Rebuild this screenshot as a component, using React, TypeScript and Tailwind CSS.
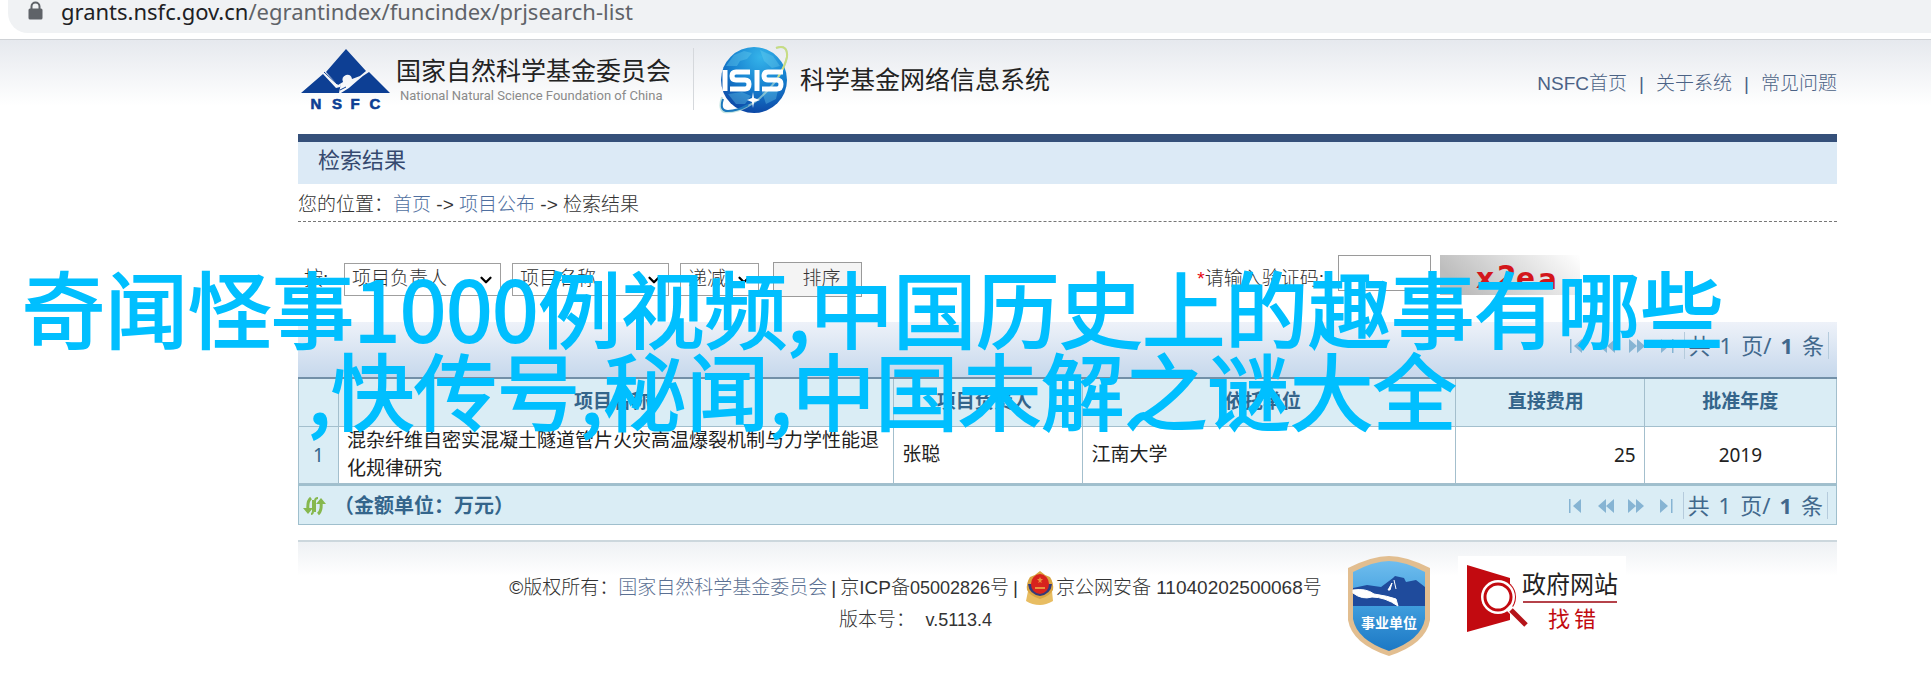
import type { ReactNode } from "react";
import { ChevronDown } from "lucide-react";

const project = {
  index: 1,
  name: "混杂纤维自密实混凝土隧道管片火灾高温爆裂机制与力学性能退化规律研究",
  leader: "张聪",
  unit: "江南大学",
  cost: 25,
  year: 2019,
};

const sortFields = [
  { id: "sort-first", label: "第一排序", value: "项目负责人", width: "w-[157px]" },
  { id: "sort-second", label: "第二排序", value: "项目名称", width: "w-[157px]" },
  { id: "sort-order", label: "顺序", value: "递减", width: "w-[79px]" },
];

function AddressBar() {
  return (
    <div className="bg-white pb-[6px] pl-2">
      <div className="flex h-[33px] items-start gap-[18px] rounded-bl-[20px] bg-[#f0f2f4] pl-5">
        <svg width="15" height="21" viewBox="0 0 15 21" aria-hidden="true">
          <path d="M3.5 10V6.5a4 4 0 0 1 8 0V10" fill="none" stroke="#5f6368" strokeWidth="2" />
          <rect x="0.5" y="8.5" width="14" height="11" rx="1.5" fill="#5f6368" />
        </svg>
        <p className="font-['Noto_Sans',sans-serif] text-[22px] leading-[22px] text-[#5f6368]">
          <span className="text-[#202124]">grants.nsfc.gov.cn</span>
          /egrantindex/funcindex/prjsearch-list
        </p>
      </div>
    </div>
  );
}

function NsfcLogo() {
  return (
    <svg width="92" height="64" viewBox="0 0 92 64" role="img" aria-label="NSFC">
      <path d="M46 1 66 23 60 28 52 31Q51 26 46 27 41 29 43 34L38 37 26 24Z" fill="#0d3f94" />
      <path d="M23 26 36 40 40 39 41 35 39 45H25V41L27 45H1Z" fill="#0d3f94" />
      <path d="M69 24 90 45H41Q50 40 57 33 62 28 69 24Z" fill="#0d3f94" />
      <path d="M24 24 37 36M40 42 46 39" stroke="#0d3f94" strokeWidth="1" />
      <g
        fill="#0d3f94"
        stroke="#0d3f94"
        strokeWidth="0.6"
        fontFamily="Liberation Sans, sans-serif"
        fontSize="15"
        fontWeight="700"
        textAnchor="middle"
      >
        <text x="16" y="61">N</text>
        <text x="37" y="61">S</text>
        <text x="55" y="61">F</text>
        <text x="75" y="61">C</text>
      </g>
    </svg>
  );
}

function IsisLogo() {
  return (
    <svg width="72" height="72" viewBox="0 0 72 72" role="img" aria-label="ISIS">
      <defs>
        <radialGradient id="globe" cx="0.6" cy="0.15" r="0.95">
          <stop offset="0" stopColor="#35b4ea" />
          <stop offset="0.5" stopColor="#1680cf" />
          <stop offset="1" stopColor="#0a3a9c" />
        </radialGradient>
      </defs>
      <circle cx="36" cy="36" r="33" fill="url(#globe)" />
      <path
        d="M8 22 16 11 26 7 34 9 29 15 22 17 19 22ZM42 6 55 12 62 22 54 24 46 17ZM10 50 24 48 33 52 27 60 18 60ZM44 48 60 46 58 55 48 60Z"
        fill="#6fd0ef"
        opacity="0.35"
      />
      <path
        d="M58 4Q70 0 69 13 65 33 42 54 22 70 6 68 0 65 4 53"
        fill="none"
        stroke="#a9d8d4"
        strokeWidth="2"
        opacity="0.7"
      />
      <path d="M58 4Q70 0 69 13 67 22 60 33" fill="none" stroke="#c8dc82" strokeWidth="2" />
      <path d="M5 55Q1 67 10 67 19 67 30 61" fill="none" stroke="#1b78bd" strokeWidth="2" />
      <g fill="none" stroke="#fff" strokeWidth="5">
        <path d="M7 26V47M39 26V47" />
        <path d="M32 28H18Q14 28 14 32 14 36 18 36H27Q31 36 31 40 31 45 27 45H12" />
        <path d="M65 28H50Q46 28 46 32 46 36 50 36H59Q63 36 63 40 63 45 59 45H44" />
      </g>
      <path d="M35 48 36 54 42 56 36 58 35 64 34 58 29 56 34 54Z" fill="#fff" />
    </svg>
  );
}

function Header() {
  return (
    <header className="border-t border-[#cfd2d6] bg-linear-to-b from-[#e6e9ee] to-white to-70%">
      <div className="flex h-[94px] items-start justify-between pr-[94px] pl-[298px]">
        <div className="flex items-start pt-2">
          <div className="flex items-start gap-1 pl-[2px]">
            <NsfcLogo />
            <div className="pt-2">
              <p className="text-[25px] leading-[31px] text-[#222]">国家自然科学基金委员会</p>
              <p className="pl-1 font-['Roboto',sans-serif] text-[13px] leading-[18px] text-[#8a8a8a]">
                National Natural Science Foundation of China
              </p>
            </div>
          </div>
          <div className="ml-[22px] h-[62px] w-px bg-[#d5d8dc]" />
          <div className="-mt-1 ml-[24px] flex items-center gap-[10px]">
            <IsisLogo />
            <p className="text-[25px] leading-[36px] text-[#222]">科学基金网络信息系统</p>
          </div>
        </div>
        <nav className="flex gap-3 pt-8 font-light text-[#4b6285]">
          <a href="#home">NSFC首页</a>
          <span>|</span>
          <a href="#about">关于系统</a>
          <span>|</span>
          <a href="#faq">常见问题</a>
        </nav>
      </div>
    </header>
  );
}

function SortForm() {
  return (
    <form className="flex h-[100px] items-center pt-[14px] font-light">
      <span className="w-[46px] pl-[6px] text-[#333]">按:</span>
      <div className="flex items-center gap-[11px]">
        {sortFields.map((field) => (
          <div key={field.id} className="relative">
            <select
              id={field.id}
              aria-label={field.label}
              className={`h-[33px] appearance-none border border-[#9f9f9f] bg-white pl-[7px] text-[#333] ${field.width}`}
            >
              <option>{field.value}</option>
            </select>
            <ChevronDown
              size={18}
              strokeWidth={3}
              className="pointer-events-none absolute top-2 right-[6px] text-black"
            />
          </div>
        ))}
      </div>
      <button
        type="button"
        className="ml-[14px] h-[35px] w-[89px] border border-[#9a9a9a] bg-[#f4f4f4] pl-2 text-[#333]"
      >
        排序
      </button>
      <div className="ml-auto flex items-center pr-[257px]">
        <label htmlFor="captcha" className="text-[#333]">
          <span className="text-red-600">*</span>请输入验证码:
        </label>
        <input
          id="captcha"
          type="text"
          className="-mt-3 ml-[14px] h-[36px] w-[93px] border border-[#9a9a9a] bg-white"
        />
        <svg width="140" height="40" viewBox="0 0 140 40" className="-mt-2 ml-[9px]" role="img" aria-label="验证码">
          <defs>
            <linearGradient id="noise" x1="0" y1="0.3" x2="1" y2="0">
              <stop offset="0" stopColor="#bdbdbd" />
              <stop offset="1" stopColor="#fff" />
            </linearGradient>
          </defs>
          <rect width="140" height="40" fill="url(#noise)" />
          <g fill="#d3161b" fontFamily="DejaVu Sans, sans-serif" fontWeight="700" fontSize="28">
            <text x="36" y="33">x</text>
            <text x="57" y="31">2</text>
            <text x="76" y="33">e</text>
            <text x="98" y="34">a</text>
          </g>
        </svg>
      </div>
    </form>
  );
}

function PageButton({ label, children }: { label: string; children: ReactNode }) {
  return (
    <button type="button" aria-label={label} className="text-[#86b4d3]">
      <svg width="18" height="16" viewBox="0 0 18 16" fill="currentColor">
        {children}
      </svg>
    </button>
  );
}

function Pager() {
  return (
    <div className="flex items-center pr-2">
      <div className="flex items-center gap-3 pr-2">
        <PageButton label="首页">
          <path d="M2 1h1.500v14H2zM14 1v14L6 8z" />
        </PageButton>
        <PageButton label="上一页">
          <path d="M9 1v14L1 8zM17 1v14L9 8z" />
        </PageButton>
        <PageButton label="下一页">
          <path d="M1 1v14l8-7zM9 1v14l8-7z" />
        </PageButton>
        <PageButton label="末页">
          <path d="M3 1v14l8-7zM14 1h1.500v14H14z" />
        </PageButton>
      </div>
      <p className="flex gap-[9px] border-x border-[#b5cbdc] px-1 font-['Noto_Sans','Noto_Sans_CJK_SC',sans-serif] text-[22px] leading-[27px] text-[#41688c]">
        <span>共</span>
        <span>1</span>
        <span>页/</span>
        <b>1</b>
        <span>条</span>
      </p>
    </div>
  );
}

function ResultTable() {
  return (
    <section>
      <div className="flex h-[57px] items-center justify-end border-b-2 border-[#7290a8] bg-linear-to-b from-[#eef2f9] to-[#c6d8ec] pb-2">
        <Pager />
      </div>
      <table className="w-full table-fixed border-collapse border border-t-0 border-[#a3bfcd] text-[#222]">
        <colgroup>
          <col className="w-[40px]" />
          <col className="w-[36.1%]" />
          <col className="w-[12.3%]" />
          <col className="w-[24.2%]" />
          <col className="w-[12.3%]" />
          <col />
        </colgroup>
        <thead>
          <tr className="h-[47px] bg-[#daedf5] text-[#34658b] *:border-r *:border-b *:border-[#a3bfcd]">
            <th aria-label="序号" />
            <th className="pr-2">项目名称</th>
            <th className="pr-2">项目负责人</th>
            <th className="pr-3">依托单位</th>
            <th className="pr-2">直接费用</th>
            <th>批准年度</th>
          </tr>
        </thead>
        <tbody>
          <tr className="h-[56px] bg-white leading-[28px] *:border-r *:border-[#a3bfcd]">
            <td className="bg-[#daedf5] text-center font-['Noto_Sans',sans-serif] text-[#34658b]">
              {project.index}
            </td>
            <td className="px-2">{project.name}</td>
            <td className="px-2">{project.leader}</td>
            <td className="px-2">{project.unit}</td>
            <td className="px-2 text-right font-['Noto_Sans',sans-serif]">{project.cost}</td>
            <td className="text-center font-['Noto_Sans',sans-serif]">{project.year}</td>
          </tr>
        </tbody>
      </table>
      <div className="flex h-[41px] items-center justify-between border border-t-2 border-[#9fbfcd] bg-[#daedf5] pt-[2px]">
        <div className="flex items-center gap-2 pl-1 text-xl font-bold text-[#34658b]">
          <button type="button" aria-label="刷新">
            <svg width="23" height="20" viewBox="0 0 23 20">
              <g fill="none" stroke="#86b84e" strokeWidth="3">
                <path d="M8 2Q4 5 5 14M15 18Q19 15 18 6" />
                <path d="M12 16V5Q12 2 15 2" strokeWidth="2" />
                <path d="M10 4V15Q10 18 8 18" strokeWidth="2" />
              </g>
              <path d="M0 12H10L5 18ZM13 8H23L18 2Z" fill="#86b84e" />
            </svg>
          </button>
          <span>（金额单位：万元）</span>
        </div>
        <Pager />
      </div>
    </section>
  );
}

function PoliceBadge() {
  return (
    <svg width="28" height="34" viewBox="0 0 28 34" aria-hidden="true">
      <path d="M2 20Q14 30 26 20L27 30Q20 34 14 34 6 34 0 30Z" fill="#e8bd62" />
      <path d="M14 0Q18 4 24 6 28 12 27 19 24 25 14 28 4 25 1 19 0 12 4 6 10 4 14 0Z" fill="#d9a441" />
      <path d="M2 13H26Q25 23 14 25 3 23 2 13Z" fill="#343a78" />
      <ellipse cx="14" cy="13" rx="9" ry="10" fill="#d8231d" />
      <path d="M14 6 15 8H17L15 10 16 12 14 11 12 12 13 10 11 8H13ZM9 16H19V18H9Z" fill="#e9913e" />
    </svg>
  );
}

function InstitutionShield() {
  return (
    <svg width="82" height="100" viewBox="0 0 82 100" role="img" aria-label="事业单位">
      <defs>
        <linearGradient id="sky" x1="0" y1="0" x2="0" y2="1">
          <stop offset="0" stopColor="#6fbdee" />
          <stop offset="0.5" stopColor="#3f9ddd" />
          <stop offset="1" stopColor="#1c78c4" />
        </linearGradient>
      </defs>
      <path d="M0 12Q24 0 41 0 58 0 82 12V64Q78 88 41 100 4 88 0 64Z" fill="#e2be90" />
      <path d="M5 16Q26 5 41 5 56 5 77 16V63Q73 84 41 95 9 84 5 63Z" fill="url(#sky)" />
      <path d="M5 32 19 29 33 31 45 22 47 20 56 22 58 26 68 24 77 31V50H5Z" fill="#1f4b9c" />
      <path
        d="M5 34Q18 32 26 38 40 40 48 43L50 50Q37 41 24 41 14 44 5 37ZM44 27 42 34 40 34ZM46 24 48 33"
        fill="#fff"
        stroke="#fff"
        strokeWidth="1"
      />
      <text
        x="41"
        y="72"
        fill="#fff"
        textAnchor="middle"
        fontSize="14"
        fontWeight="700"
        fontFamily="Noto Sans CJK SC, sans-serif"
      >
        事业单位
      </text>
    </svg>
  );
}

function ReportErrorLogo() {
  return (
    <svg width="168" height="84" viewBox="0 0 168 84" role="img" aria-label="政府网站找错">
      <rect width="168" height="84" fill="#fff" />
      <path d="M9 9 52 22V64L9 76Z" fill="#c20a10" />
      <circle cx="40" cy="41" r="18" fill="#c20a10" />
      <circle cx="40" cy="41" r="17" fill="#fff" />
      <circle cx="40" cy="41" r="13" fill="#fff" stroke="#c20a10" strokeWidth="3" />
      <path d="M50 51 56 57" stroke="#fff" strokeWidth="7" />
      <path d="M53 54 68 69" stroke="#b5141a" strokeWidth="5" />
      <g fontFamily="Noto Sans CJK SC, sans-serif" textAnchor="middle" fontSize="24">
        <text x="112" y="37" fill="#222">政府网站</text>
        <g fontSize="22" fill="#c20a10">
          <text x="101" y="71">找</text>
          <text x="127" y="71">错</text>
        </g>
      </g>
      <path d="M65 46H159" stroke="#b5424a" strokeWidth="2" />
    </svg>
  );
}

function Footer() {
  return (
    <footer className="mt-[15px] border-t-2 border-[#ccd7dd] bg-linear-to-b from-[#eef1f4] to-white to-30%">
      <div className="flex justify-center gap-[26px] pt-[14px]">
        <div className="pt-[13px] text-center font-light text-[#333]">
          <p className="flex items-center leading-[38px]">
            ©版权所有：
            <a href="#nsfc" className="text-[#5b7093]">
              国家自然科学基金委员会
            </a>
            <span className="px-1">|</span>
            京ICP备<span className="text-lg leading-[38px]">05002826</span>号
            <span className="pr-2 pl-1">|</span>
            <PoliceBadge />
            <span className="pl-[2px]">京公网安备 11040202500068号</span>
          </p>
          <p className="leading-[26px]">
            版本号：&nbsp; <span className="text-lg leading-[26px]">v.5113.4</span>
          </p>
        </div>
        <div className="flex gap-7">
          <InstitutionShield />
          <ReportErrorLogo />
        </div>
      </div>
    </footer>
  );
}

export default function App() {
  return (
    <div className="relative min-h-screen overflow-hidden bg-white font-['Liberation_Sans','Noto_Sans_CJK_SC',sans-serif] text-[19px] leading-[24px]">
      <AddressBar />
      <Header />
      <main className="pr-[94px] pl-[298px]">
        <h1 className="border-t-8 border-[#35507a] bg-[#dceaf6] pt-1 pb-2 pl-5 text-[22px] leading-[30px] text-[#35496f]">
          检索结果
        </h1>
        <div className="border-b border-dashed border-[#777] pt-[9px] pb-1 font-light text-[#333]">
          您的位置：
          <a href="#home" className="text-[#4f6fa0]">
            首页
          </a>
          {" -> "}
          <a href="#projects" className="text-[#4f6fa0]">
            项目公布
          </a>
          {" -> "}
          检索结果
        </div>
        <SortForm />
        <ResultTable />
        <Footer />
      </main>

      {/* Caption over the page */}
      <div className="pointer-events-none absolute top-[265px] left-[22px] font-['Noto_Sans_CJK_SC',sans-serif] text-[83px] leading-[82px] whitespace-nowrap text-[#00bfff] [-webkit-text-stroke:2px_#00bfff]">
        <p>奇闻怪事1000例视频,中国历史上的趣事有哪些</p>
        <p className="pl-[286px]">,快传号,秘闻,中国未解之谜大全</p>
      </div>
    </div>
  );
}
